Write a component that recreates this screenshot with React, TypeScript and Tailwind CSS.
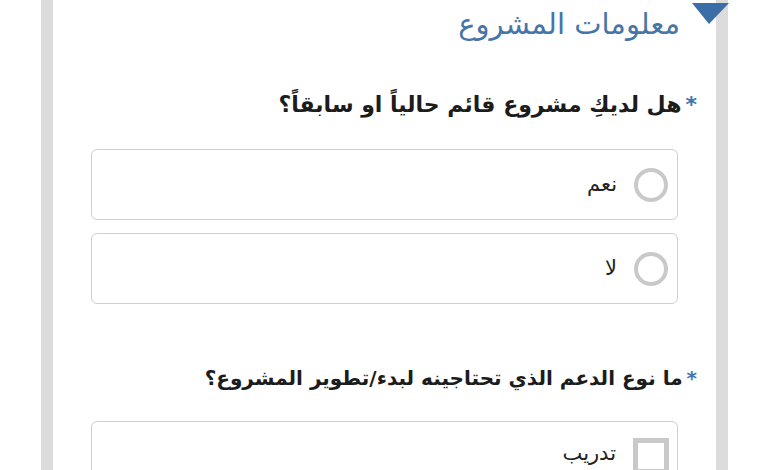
const arabic = { fontFamily: '"DejaVu Sans", "Noto Sans", sans-serif' };

function RadioOption({ label }: { label: string }) {
  return (
    <label className="flex h-[71px] items-center gap-[17px] rounded-[6px] border border-[#cfcfcf] bg-white pr-[9px]">
      <span className="h-[34px] w-[34px] shrink-0 rounded-full border-[4px] border-[#c9c9c9]" />
      <span className="text-[21px] text-[#222]">{label}</span>
    </label>
  );
}

function CheckOption({ label }: { label: string }) {
  return (
    <label className="flex h-[71px] items-start gap-[17px] rounded-[6px] border border-[#cfcfcf] bg-white pr-[8px] pt-[16px]">
      <span className="h-[36px] w-[36px] shrink-0 border-[5px] border-[#c9c9c9]" />
      <span className="text-[21px] text-[#222]">{label}</span>
    </label>
  );
}

function Question({ text, size }: { text: string; size: string }) {
  return (
    <div className={`flex items-start pr-[19px] font-bold text-[#1c1c1c] ${size}`}>
      <span className="ml-[4px] text-[#3f74ad]">*</span>
      <span>{text}</span>
    </div>
  );
}

export default function App() {
  return (
    <div className="h-[470px] w-[780px] overflow-hidden bg-white" style={arabic}>
      <div className="flex h-full pl-[41px]">
        <div className="w-[12px] bg-[#dcdcdc]" />
        <div dir="rtl" className="relative w-[663px] bg-white">
          {/* corner ribbon */}
          <svg className="absolute right-[-13px] top-[3px]" width="37" height="21" viewBox="0 0 37 21">
            <polygon points="0,0 37,0 17,21" fill="#3b6ea6" />
          </svg>

          <h2 className="pr-[36px] pt-[2px] text-[29px] leading-[44px] text-[#4675a7]">
            معلومات المشروع
          </h2>

          <div className="mt-[42px]">
            <Question size="text-[22px]" text="هل لديكِ مشروع قائم حالياً او سابقاً؟" />
          </div>

          <div className="mt-[28px] flex flex-col gap-[13px] px-[38px]">
            <RadioOption label="نعم" />
            <RadioOption label="لا" />
          </div>

          <div className="mt-[59px]">
            <Question size="text-[20px]" text="ما نوع الدعم الذي تحتاجينه لبدء/تطوير المشروع؟" />
          </div>

          <div className="mt-[28px] px-[38px]">
            <CheckOption label="تدريب" />
          </div>
        </div>
        <div className="w-[12px] bg-[#dcdcdc]" />
      </div>
    </div>
  );
}
